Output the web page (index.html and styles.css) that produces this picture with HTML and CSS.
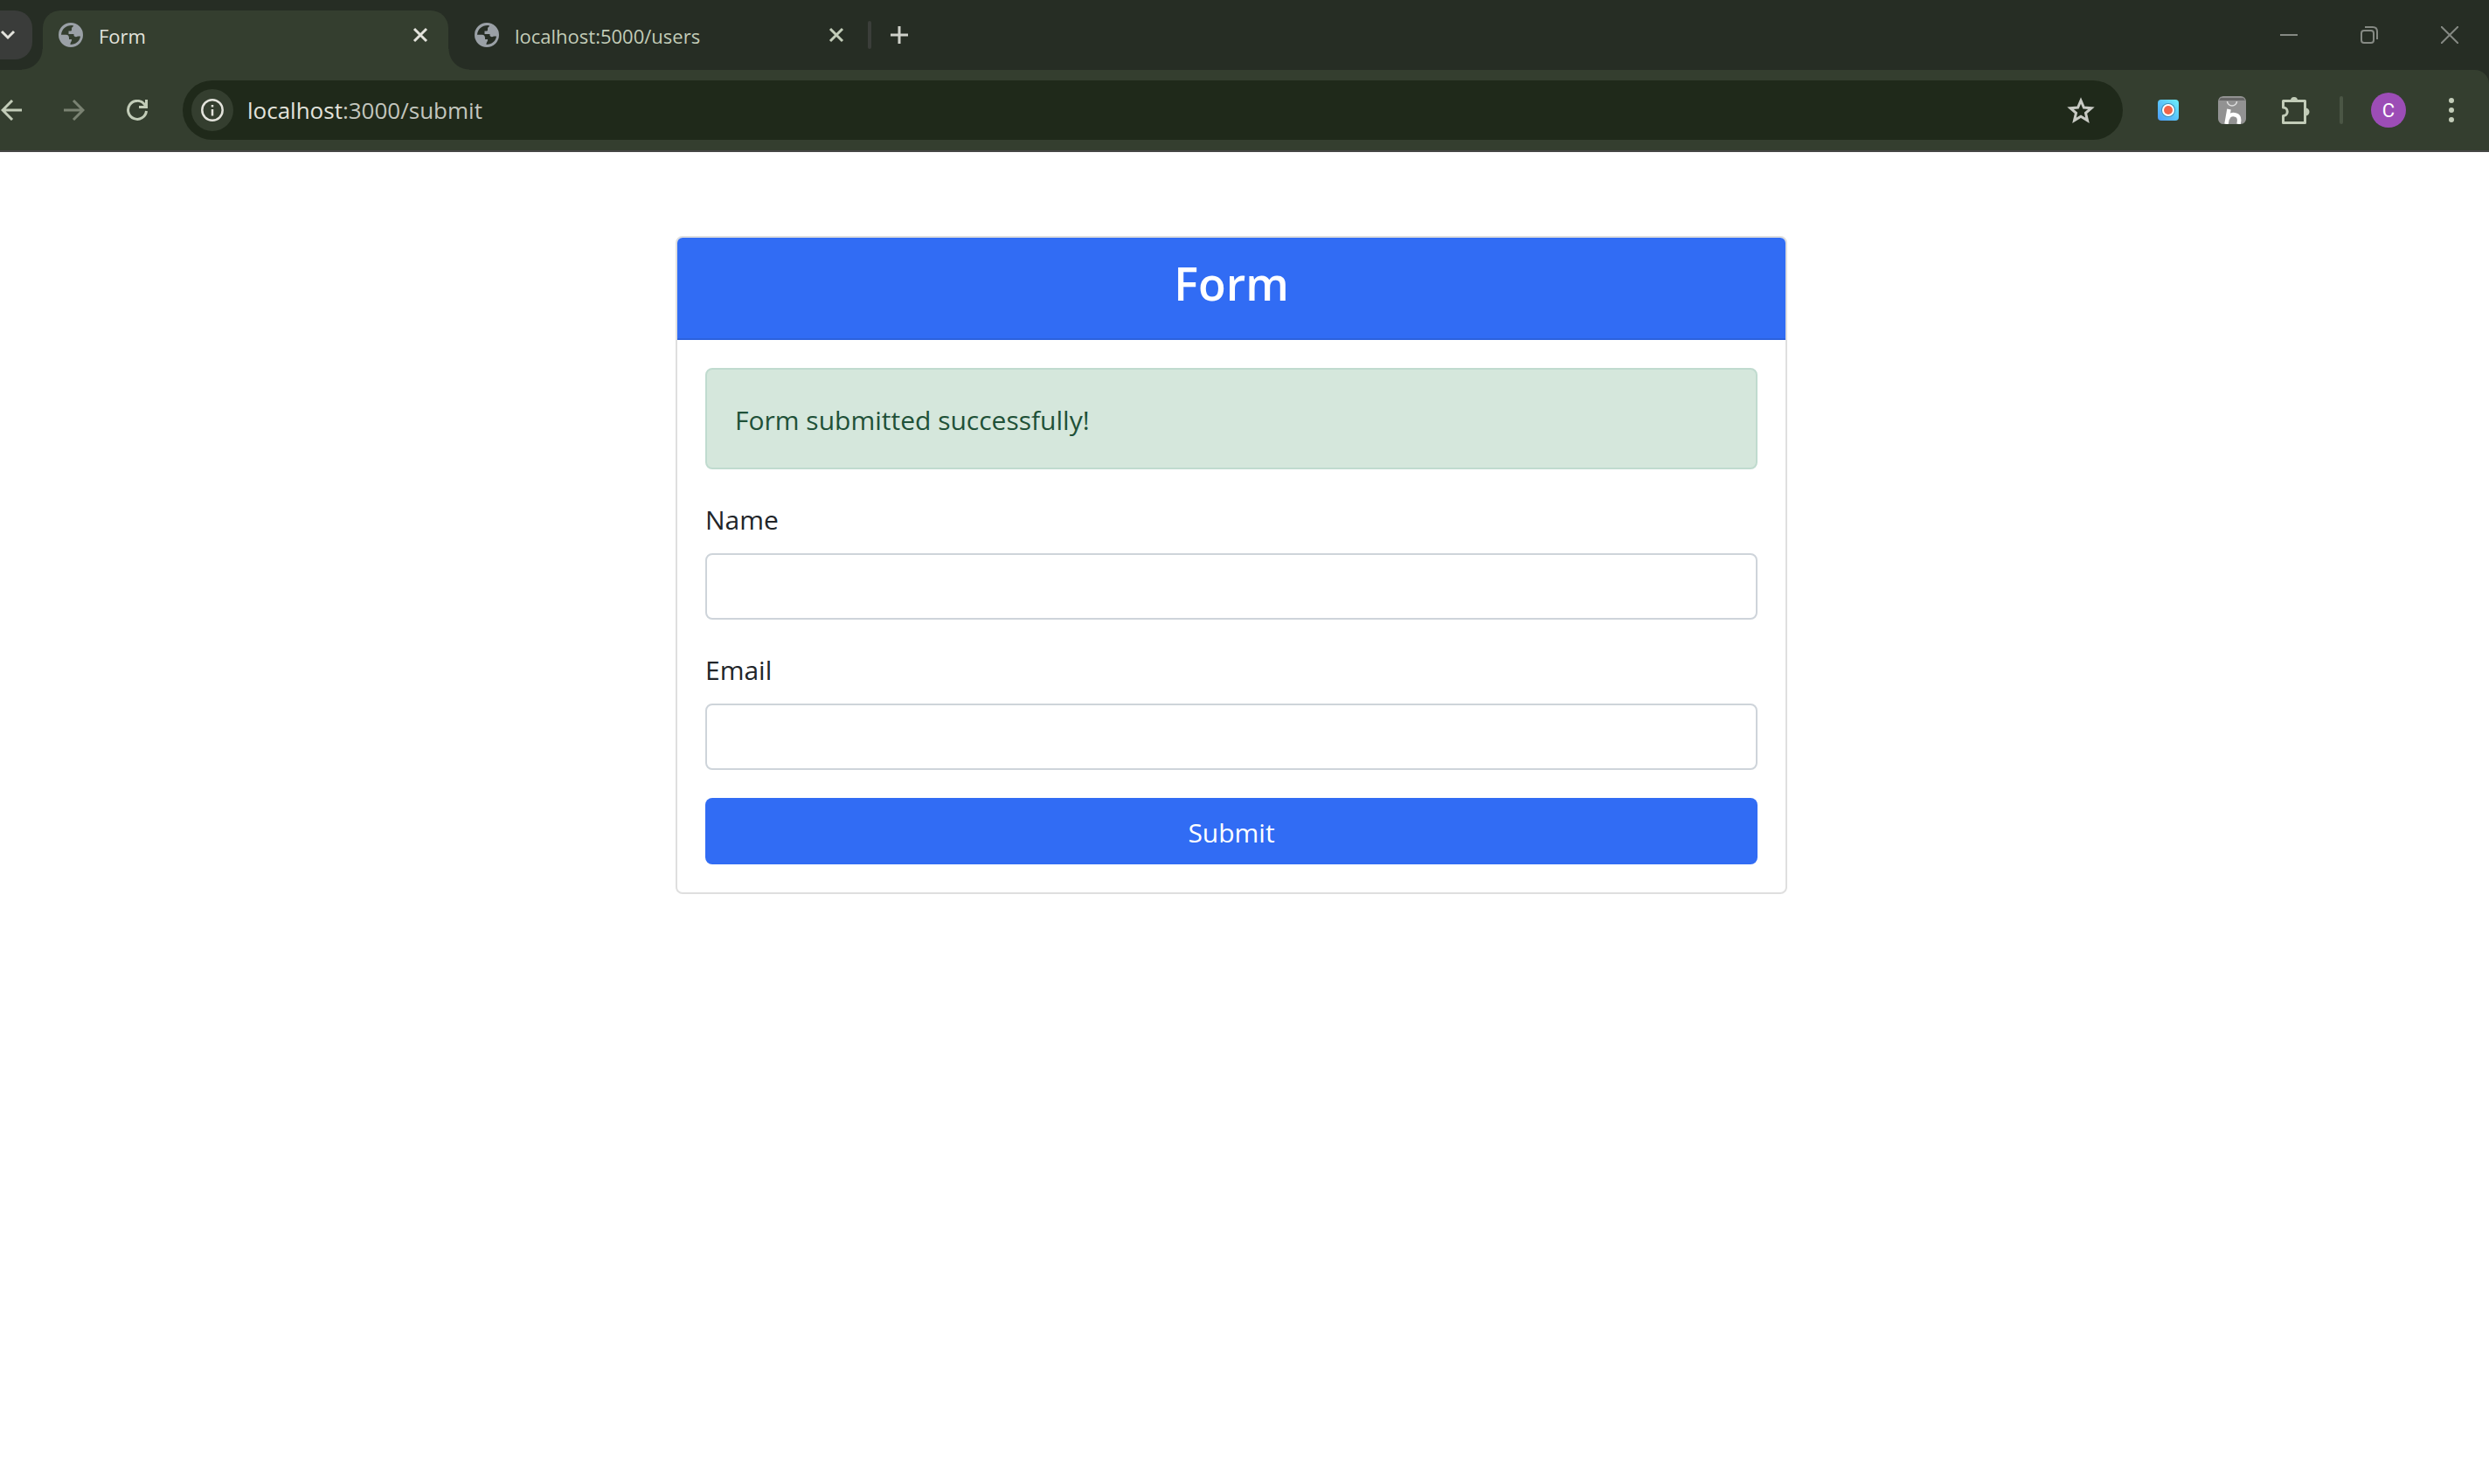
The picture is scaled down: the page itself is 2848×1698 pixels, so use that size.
FILE: index.html
```html
<!DOCTYPE html>
<html lang="en">
<head>
<meta charset="utf-8">
<title>Form</title>
<link rel="stylesheet" href="styles.css">
</head>
<body>
<svg class="defs" aria-hidden="true">
  <symbol id="globe" viewBox="0 0 28 28">
    <path fill="#9aa0a6" fill-rule="evenodd" d="M14 0A14 14 0 1 1 14 28A14 14 0 1 1 14 0ZM15 3C8.500 3 3.500 7.500 3 13.800H8.500C11 13.800 12 15.500 12 17.500V19H15C15.500 21 13.500 22 13.500 25C19.500 25 24.500 21 25 15.500H22C19.500 17 17.500 15.500 17.500 14.500V13H11.500V9.500H13.500C15.500 9.500 15 7.500 15 6.500C15 5 17 5 17 3.300Z"/>
  </symbol>
  <symbol id="cross" viewBox="0 0 18 18">
    <path d="M2 2L16 16M16 2L2 16" stroke="currentColor" stroke-width="3" fill="none"/>
  </symbol>
</svg>

<header class="browser">
  <div class="tabstrip">
    <button class="tab-search" aria-label="Search tabs">
      <svg width="18" height="12" viewBox="0 0 18 12"><path d="M2 2L9 9L16 2" stroke="currentColor" stroke-width="3" fill="none"/></svg>
    </button>
    <div class="tab tab-active">
      <svg class="favicon"><use href="#globe"/></svg>
      <span class="tab-title">Form</span>
      <button class="tab-close" aria-label="Close tab"><svg><use href="#cross"/></svg></button>
    </div>
    <div class="tab">
      <svg class="favicon"><use href="#globe"/></svg>
      <span class="tab-title">localhost:5000/users</span>
      <button class="tab-close" aria-label="Close tab"><svg><use href="#cross"/></svg></button>
    </div>
    <span class="tab-divider"></span>
    <button class="new-tab" aria-label="New tab">
      <svg width="20" height="20" viewBox="0 0 20 20"><path d="M10 0V20M0 10H20" stroke="currentColor" stroke-width="3"/></svg>
    </button>
    <div class="window-controls">
      <button aria-label="Minimize"><svg width="20" height="20" viewBox="0 0 20 20"><path d="M0 10H20" stroke="currentColor" stroke-width="2"/></svg></button>
      <button aria-label="Restore"><svg width="20" height="20" viewBox="0 0 20 20"><g stroke="currentColor" stroke-width="2" fill="none"><rect x="1" y="5" width="14" height="14" rx="3"/><path d="M5 1H14Q19 1 19 6V15"/></g></svg></button>
      <button aria-label="Close"><svg width="20" height="20" viewBox="0 0 20 20"><path d="M0 0L20 20M20 0L0 20" stroke="currentColor" stroke-width="2"/></svg></button>
    </div>
  </div>

  <div class="toolbar">
    <nav class="nav-buttons">
      <button aria-label="Back"><svg width="24" height="24" viewBox="0 0 24 24"><path d="M24 12H2M13 1L2 12L13 23" stroke="currentColor" stroke-width="3" fill="none"/></svg></button>
      <button class="is-off" aria-label="Forward"><svg width="24" height="24" viewBox="0 0 24 24"><path d="M0 12H22M11 1L22 12L11 23" stroke="currentColor" stroke-width="3" fill="none"/></svg></button>
      <button aria-label="Reload"><svg width="24" height="24" viewBox="0 0 24 24"><path d="M22.500 13A10.500 10.500 0 1 1 20 5L22.500 8.500M22.500 0V8.500H14" stroke="currentColor" stroke-width="3" fill="none"/></svg></button>
    </nav>
    <div class="omnibox">
      <button class="site-info" aria-label="Site information">
        <svg width="26" height="26" viewBox="0 0 26 26"><circle cx="13" cy="13" r="11.700" fill="none" stroke="currentColor" stroke-width="2.500"/><path d="M13 12V19.500M13 7V9.500" stroke="currentColor" stroke-width="2.500"/></svg>
      </button>
      <span class="url">localhost<span class="url-rest">:3000/submit</span></span>
      <button class="bookmark" aria-label="Bookmark this page">
        <svg width="32" height="30" viewBox="0 0 32 30"><path d="M16 4L19.400 12L28 12.700L21.500 18.300L23.500 26.800L16 22.200L8.500 26.800L10.500 18.300L4 12.700L12.600 12Z" stroke="currentColor" stroke-width="3" fill="none"/></svg>
      </button>
    </div>
    <div class="extensions">
      <button aria-label="Screen recorder">
        <svg width="32" height="32" viewBox="0 0 32 32">
          <defs><linearGradient id="rec" x1="0" y1="1" x2="1" y2="0"><stop offset="0" stop-color="#4b9bf8"/><stop offset="1" stop-color="#6cf0fb"/></linearGradient></defs>
          <rect x="4" y="4" width="24" height="24" rx="4" fill="url(#rec)"/><circle cx="16" cy="16" r="8" fill="#3d8fb5"/><circle cx="16" cy="16" r="7" fill="#fff"/><circle cx="16" cy="16" r="5" fill="#f06449"/>
        </svg>
      </button>
      <button aria-label="Shopping assistant">
        <svg width="32" height="32" viewBox="0 0 32 32">
          <rect width="32" height="32" rx="6" fill="#929292"/><path d="M3 2H29L31 5H1Z" fill="#686868"/>
          <path d="M10.500 6A5.500 5 0 0 0 21.500 6" fill="none" stroke="#dedede" stroke-width="1.500"/>
          <path d="M12.500 15L9.500 32M11 26C12.500 21 17 20.500 20 21.500C24 22.500 25 26 23.500 32" fill="none" stroke="#fff" stroke-width="4.500"/>
        </svg>
      </button>
      <button aria-label="Extensions">
        <svg width="32" height="32" viewBox="0 0 32 32"><path d="M1.500 5.500H26.500V30.500H1.500V22.500A4.700 4.700 0 0 0 1.500 13Z" fill="none" stroke="currentColor" stroke-width="3" stroke-linejoin="round"/><path d="M10 5A4 4 0 0 1 18 5ZM27 13.500A4 4 0 0 1 27 22.500Z" fill="currentColor"/></svg>
      </button>
    </div>
    <span class="toolbar-divider"></span>
    <button class="avatar" aria-label="Profile">C</button>
    <button class="more" aria-label="Menu">
      <svg width="8" height="30" viewBox="0 0 8 30"><g fill="currentColor"><circle cx="4" cy="4" r="3"/><circle cx="4" cy="15" r="3"/><circle cx="4" cy="26" r="3"/></g></svg>
    </button>
  </div>
</header>

<main class="page">
  <section class="card">
    <h2 class="card-header">Form</h2>
    <form class="card-body">
      <p class="alert" role="alert">Form submitted successfully!</p>
      <div class="field">
        <label for="name">Name</label>
        <input id="name" type="text">
      </div>
      <div class="field">
        <label for="email">Email</label>
        <input id="email" type="email">
      </div>
      <button class="submit" type="button">Submit</button>
    </form>
  </section>
</main>
</body>
</html>
```

FILE: styles.css
```css
:root {
  --strip: #262d24;
  --bar: #343e2f;
  --field: #1f291a;
  --icon: #c2ccb8;
  --primary: #316cf4;
}

* { box-sizing: border-box; }

body {
  margin: 0;
  background: #fff;
  color: #212529;
  font-family: "Segoe UI", "Open Sans", "Noto Sans", sans-serif;
}

button {
  display: flex;
  align-items: center;
  justify-content: center;
  flex: none;
  margin: 0;
  padding: 0;
  border: 0;
  background: none;
  color: inherit;
  font: inherit;
}

svg { display: block; flex: none; }

.defs { position: absolute; width: 0; height: 0; }

/* Browser chrome */
.browser {
  background: var(--strip);
  color: var(--icon);
  border-bottom: 2px solid #464746;
}

.tabstrip {
  display: flex;
  align-items: center;
  height: 80px;
}

.tab-search {
  justify-content: flex-start;
  width: 37px;
  height: 56px;
  margin-right: 12px;
  border-radius: 0 20px 20px 0;
  background: #3a3c3a;
  color: #e3e3dc;
}

.tab {
  position: relative;
  display: flex;
  align-items: center;
  align-self: flex-end;
  width: 464px;
  height: 68px;
  padding: 0 23px 12px 18px;
  font-size: 22px;
}

.tab + .tab { margin-left: 12px; }

.tab-active {
  border-radius: 20px 20px 0 0;
  background: var(--bar);
  color: #e3e3dc;
}

.tab-active::before,
.tab-active::after {
  content: "";
  position: absolute;
  bottom: 0;
  width: 24px;
  height: 24px;
}

.tab-active::before {
  right: 100%;
  background: radial-gradient(circle at 0 0, transparent 23px, var(--bar) 24px);
}

.tab-active::after {
  left: 100%;
  background: radial-gradient(circle at 100% 0, transparent 23px, var(--bar) 24px);
}

.favicon { width: 28px; height: 28px; margin-right: 18px; }
.tab-title { flex: 1; padding-top: 2px; line-height: 32px; }
.tab-close svg { width: 18px; height: 18px; }

.tab-divider {
  width: 4px;
  height: 32px;
  margin: 0 22px 0 4px;
  border-radius: 2px;
  background: #3b3e3a;
}

.new-tab { color: #cfd1ca; }

.window-controls {
  display: flex;
  gap: 72px;
  margin-left: auto;
  padding-right: 35px;
  color: #858983;
}

.toolbar {
  display: flex;
  align-items: center;
  height: 92px;
  padding: 0 39px 0 1px;
  border-top-right-radius: 16px;
  background: var(--bar);
}

.nav-buttons { display: flex; gap: 48px; margin-right: 40px; }
.is-off { color: #7a8272; }

.omnibox {
  display: flex;
  flex: 1;
  align-items: center;
  height: 68px;
  padding: 0 32px 0 10px;
  border-radius: 34px;
  background: var(--field);
}

.site-info {
  width: 48px;
  height: 48px;
  margin-right: 16px;
  border-radius: 50%;
  background: var(--bar);
  color: #e3e3dc;
}

.url { flex: 1; color: #e3e3dc; font-size: 26px; line-height: 36px; }
.url-rest { color: #c3c6be; }
.bookmark { color: #c8cac4; }

.extensions { display: flex; gap: 41px; margin: 0 34px 0 36px; }

.toolbar-divider {
  width: 4px;
  height: 32px;
  border-radius: 2px;
  background: #4b5645;
}

.avatar {
  width: 40px;
  height: 40px;
  margin: 0 48px 0 32px;
  border-radius: 50%;
  background: #9c4db6;
  color: #fff;
  font-family: Roboto, sans-serif;
  font-size: 22px;
}

/* Page */
.page {
  display: flex;
  justify-content: center;
  padding: 96px 30px 96px 0;
}

.card {
  flex: 0 1 1272px;
  overflow: hidden;
  border: 2px solid #dfdfdf;
  border-radius: 8px;
}

.card-header {
  margin: 0;
  padding: 18px 16px 30px;
  border-bottom: 2px solid #2c61dc;
  background: var(--primary);
  color: #fff;
  font-size: 52px;
  font-weight: 600;
  line-height: 67px;
  text-align: center;
}

.card-body {
  display: flex;
  flex-direction: column;
  gap: 32px;
  padding: 32px;
  font-size: 30px;
  line-height: 48px;
}

.alert {
  margin: 0;
  padding: 34px 32px 30px;
  border: 2px solid #c0dbcf;
  border-radius: 8px;
  background: #d5e7dc;
  color: #1f5138;
}

.field { display: flex; flex-direction: column; gap: 14px; }
.field label { padding-top: 2px; }

.field input {
  width: 100%;
  height: 76px;
  padding: 12px 24px;
  border: 2px solid #ced4da;
  border-radius: 8px;
  background: #fff;
  color: inherit;
  font: inherit;
}

.submit {
  height: 76px;
  padding-top: 4px;
  border-radius: 8px;
  background: var(--primary);
  color: #fff;
}
```
